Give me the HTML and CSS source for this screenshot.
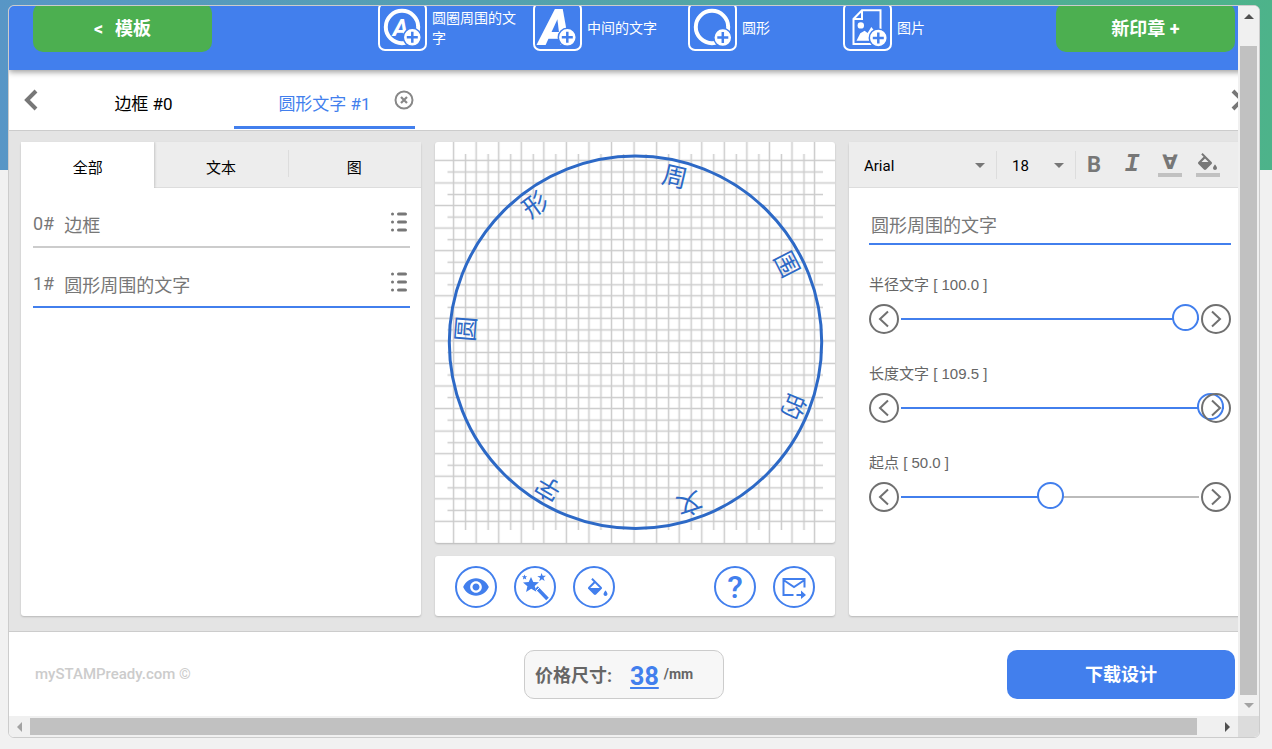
FILE: index.html
```html
<!DOCTYPE html>
<html lang="zh-CN">
  <head>
    <meta charset="UTF-8" />
    <meta name="viewport" content="width=device-width, initial-scale=1.0" />
    <title>mySTAMPready</title>
    <link rel="stylesheet" href="styles.css">
  </head>
  <body>
    <div class="frame">
      <div class="viewport">
        <div class="app">
          <header class="header">
            <button class="btn btn-green"><span class="lt">&lt;</span>模板</button>
            <nav class="add-menu">
              <button class="add-item">
                <svg class="add-icon" viewBox="0 0 49 49">
                  <rect x="1" y="1" width="47" height="47" rx="6" class="line2" />
                  <circle cx="24" cy="25" r="16.2" class="line4" />
                  <text x="22.5" y="34" class="letter" font-size="24">A</text>
                  <circle cx="34.3" cy="35.3" r="9" class="plus-bg" />
                  <path d="M34.3 29.8v11M28.8 35.3h11" class="plus" />
                </svg>
                <span>圆圈周围的文字</span>
              </button>
              <button class="add-item">
                <svg class="add-icon" viewBox="0 0 49 49">
                  <rect x="1" y="1" width="47" height="47" rx="6" class="line2" />
                  <text x="22.5" y="43" class="letter heavy" font-size="49">A</text>
                  <circle cx="34.3" cy="35.3" r="9" class="plus-bg" />
                  <path d="M34.3 29.8v11M28.8 35.3h11" class="plus" />
                </svg>
                <span>中间的文字</span>
              </button>
              <button class="add-item">
                <svg class="add-icon" viewBox="0 0 49 49">
                  <rect x="1" y="1" width="47" height="47" rx="6" class="line2" />
                  <circle cx="24" cy="25" r="16.2" class="line4" />
                  <circle cx="34.8" cy="35.6" r="9" class="plus-bg" />
                  <path d="M34.8 30.1v11M29.3 35.6h11" class="plus" />
                </svg>
                <span>圆形</span>
              </button>
              <button class="add-item">
                <svg class="add-icon" viewBox="0 0 49 49">
                  <rect x="1" y="1" width="47" height="47" rx="6" class="line2" />
                  <path d="M19 8.2h18.5V42H10.5V17z M19 8.2V17H10.5" class="line2" />
                  <circle cx="17.8" cy="23.4" r="3.2" fill="#fff" />
                  <path d="M13.5 38.8l3.8-7.5 4.3-2.600 3 2.2 3.7-6 5.7 7v6.9z" fill="#fff" />
                  <circle cx="35.3" cy="35.9" r="9" class="plus-bg" />
                  <path d="M35.3 30.4v11M29.8 35.9h11" class="plus" />
                </svg>
                <span>图片</span>
              </button>
            </nav>
            <button class="btn btn-green">新印章 +</button>
          </header>

          <div class="layers">
            <button class="scroll-btn" aria-label="上一个">
              <svg width="16" height="22" viewBox="0 0 16 22"><path d="M13 2L4 11l9 9" class="chevron" /></svg>
            </button>
            <div class="layer"><button class="layer-name">边框 #0</button></div>
            <div class="layer active">
              <button class="layer-name">圆形文字 #1</button>
              <button class="close" aria-label="删除">
                <svg width="20" height="20" viewBox="0 0 20 20">
                  <circle cx="10" cy="10" r="8.5" fill="none" stroke="#888" stroke-width="2" />
                  <path d="M7 7l6 6M13 7l-6 6" stroke="#888" stroke-width="2.2" />
                </svg>
              </button>
            </div>
            <button class="scroll-btn last" aria-label="下一个">
              <svg width="16" height="22" viewBox="0 0 16 22"><path d="M2 2l9 9-9 9" class="chevron" /></svg>
            </button>
          </div>

          <main class="workspace">
            <section class="panel">
              <div class="filters">
                <button class="filter active">全部</button>
                <button class="filter">文本</button>
                <button class="filter">图</button>
              </div>
              <ul class="items">
                <li class="item">
                  <span>0#</span><span class="item-name">边框</span>
                  <button class="item-menu" aria-label="菜单">
                    <svg width="18" height="22" viewBox="0 0 18 22">
                      <path d="M2.5 3h.01M2.5 11h.01M2.5 19h.01M8.5 3h7M8.5 11h7M8.5 19h7" />
                    </svg>
                  </button>
                </li>
                <li class="item active">
                  <span>1#</span><span class="item-name">圆形周围的文字</span>
                  <button class="item-menu" aria-label="菜单">
                    <svg width="18" height="22" viewBox="0 0 18 22">
                      <path d="M2.5 3h.01M2.5 11h.01M2.5 19h.01M8.5 3h7M8.5 11h7M8.5 19h7" />
                    </svg>
                  </button>
                </li>
              </ul>
            </section>

            <section class="center">
              <div class="stamp">
                <svg viewBox="0 0 400 401">
                  <defs>
                    <pattern id="grid-a" x="7.32" y="7.12" width="22.56" height="22.56" patternUnits="userSpaceOnUse">
                      <path d="M11.28 0v22.56M0 11.28h22.56" class="grid-line" />
                    </pattern>
                    <pattern id="grid-b" x="19.32" y="18.72" width="22.56" height="22.56" patternUnits="userSpaceOnUse">
                      <path d="M11.28 0v22.56M0 11.28h22.56" class="grid-line" />
                    </pattern>
                  </defs>
                  <rect width="400" height="401" fill="url(#grid-a)" />
                  <rect x="12.5" y="12" width="375.5" height="376" fill="url(#grid-b)" />
                  <circle cx="200.5" cy="200.3" r="186.2" class="ring" />
                  <g class="ring-text">
                    <text x="200.5" y="39" transform="rotate(-85.5 200.5 200.3)">圆</text>
                    <text x="200.5" y="39" transform="rotate(-36.1 200.5 200.3)">形</text>
                    <text x="200.5" y="39" transform="rotate(13.3 200.5 200.3)">周</text>
                    <text x="200.5" y="39" transform="rotate(62.7 200.5 200.3)">围</text>
                    <text x="200.5" y="39" transform="rotate(112.1 200.5 200.3)">的</text>
                    <text x="200.5" y="39" transform="rotate(161.5 200.5 200.3)">文</text>
                    <text x="200.5" y="39" transform="rotate(210.9 200.5 200.3)">字</text>
                  </g>
                </svg>
              </div>
              <div class="tools">
                <button class="tool" aria-label="预览">
                  <svg width="28" height="28" viewBox="0 0 24 24"><path d="M12 4.5C7 4.5 2.73 7.61 1 12c1.73 4.39 6 7.5 11 7.5s9.27-3.11 11-7.5c-1.73-4.39-6-7.5-11-7.5zM12 17c-2.76 0-5-2.24-5-5s2.24-5 5-5 5 2.24 5 5-2.24 5-5 5zm0-8c-1.66 0-3 1.34-3 3s1.34 3 3 3 3-1.34 3-3-1.34-3-3-3z" /></svg>
                </button>
                <button class="tool" aria-label="效果">
                  <svg width="28" height="30" viewBox="0 0 28 30">
                    <path d="M10 5l2.3 5 5.7.2-4.3 3.9 1.7 5.6-5.2-2.9-5.1 3.2 1.3-5.8L2 10.5l5.7-.6z" />
                    <path d="M20.5 1l1.2 2.8 3.2-.1-2.4 2.1 1.2 3.1-2.8-1.6-2.600 2 .8-3.2-2.8-1.8 3.2-.3z" />
                    <path d="M3.5 2.5l.8 1.7 1.9.1-1.5 1.3.6 1.9-1.7-1.1-1.7 1.2.5-2L.9 4.3l1.9-.1z" />
                    <path d="M15.5 15.5L26.5 27" stroke="#427fed" stroke-width="3.6" />
                    <path d="M15 19l4-4" stroke="#fff" stroke-width="1" />
                  </svg>
                </button>
                <button class="tool" aria-label="颜色">
                  <svg class="bucket" width="24" height="24" viewBox="0 0 24 24"><path d="M16.56 8.94L7.62 0 6.21 1.41l2.38 2.38-5.15 5.15c-.59.59-.59 1.54 0 2.12l5.5 5.5c.29.29.68.44 1.06.44s.77-.15 1.06-.44l5.5-5.5c.59-.58.59-1.53 0-2.12zM5.21 10L10 5.21 14.79 10H5.21zM20.5 12.5s-2 2.17-2 3.5c0 1.1.9 2 2 2s2-.9 2-2c0-1.33-2-3.5-2-3.5z" /></svg>
                </button>
                <button class="tool help">?</button>
                <button class="tool" aria-label="发送">
                  <svg width="26" height="24" viewBox="0 0 26 24">
                    <path d="M12.5 20H2.5V4h21v8.5M2.5 5l10.5 7 10.5-7" fill="none" stroke="#427fed" stroke-width="2" />
                    <path d="M15.5 19h4.5v-3.5l5 4.5-5 4V21h-4.5z" />
                  </svg>
                </button>
              </div>
            </section>

            <section class="panel">
              <div class="format">
                <label class="picker font"><select aria-label="字体"><option>Arial</option></select></label>
                <label class="picker size"><select aria-label="字号"><option>18</option></select></label>
                <div class="styles">
                  <button class="style bold">B</button>
                  <button class="style italic">I</button>
                  <button class="style color">∀</button>
                  <button class="style color" aria-label="填充颜色">
                    <svg width="20" height="18" viewBox="3 0 20 18" fill="#777"><path d="M16.56 8.94L7.62 0 6.21 1.41l2.38 2.38-5.15 5.15c-.59.59-.59 1.54 0 2.12l5.5 5.5c.29.29.68.44 1.06.44s.77-.15 1.06-.44l5.5-5.5c.59-.58.59-1.53 0-2.12zM6.5 9L10 5.5 13.5 9zM20 11.5s-2 2.17-2 3.5c0 1.1.9 2 2 2s2-.9 2-2c0-1.33-2-3.5-2-3.5z" /></svg>
                  </button>
                </div>
              </div>
              <div class="props">
                <input class="text" type="text" value="圆形周围的文字" aria-label="文字" />
                <div class="prop">
                  <label for="radius">半径文字 [ 100.0 ]</label>
                  <div class="slider">
                    <button class="step" aria-label="减少"><svg width="26" height="26" viewBox="0 0 26 26"><path d="M17 5.5L9 13l8 7.5" /></svg></button>
                    <input id="radius" type="range" min="0" max="100" value="100" style="--fill: 100%" />
                    <button class="step" aria-label="增加"><svg width="26" height="26" viewBox="0 0 26 26"><path d="M9 5.5l8 7.5-8 7.5" /></svg></button>
                  </div>
                </div>
                <div class="prop">
                  <label for="length">长度文字 [ 109.5 ]</label>
                  <div class="slider over">
                    <button class="step" aria-label="减少"><svg width="26" height="26" viewBox="0 0 26 26"><path d="M17 5.5L9 13l8 7.5" /></svg></button>
                    <input id="length" type="range" min="0" max="109.5" step="0.5" value="109.5" style="--fill: 100%" />
                    <button class="step" aria-label="增加"><svg width="26" height="26" viewBox="0 0 26 26"><path d="M9 5.5l8 7.5-8 7.5" /></svg></button>
                  </div>
                </div>
                <div class="prop">
                  <label for="start">起点 [ 50.0 ]</label>
                  <div class="slider">
                    <button class="step" aria-label="减少"><svg width="26" height="26" viewBox="0 0 26 26"><path d="M17 5.5L9 13l8 7.5" /></svg></button>
                    <input id="start" type="range" min="0" max="100" value="50" style="--fill: 54%" />
                    <button class="step" aria-label="增加"><svg width="26" height="26" viewBox="0 0 26 26"><path d="M9 5.5l8 7.5-8 7.5" /></svg></button>
                  </div>
                </div>
              </div>
            </section>
          </main>

          <footer class="footer">
            <span class="brand">mySTAMPready.com ©</span>
            <div class="price">
              <span class="price-label">价格尺寸:</span>
              <a class="price-value" href="#">38</a>
              <span class="price-unit">/mm</span>
            </div>
            <button class="btn btn-blue">下载设计</button>
          </footer>
        </div>
      </div>

      <div class="bar vertical">
        <span class="arrow"><i class="up"></i></span>
        <span class="thumb"></span>
        <span class="arrow"><i class="down"></i></span>
      </div>
      <div class="bar horizontal">
        <span class="arrow"><i class="left"></i></span>
        <span class="thumb"></span>
        <span class="arrow"><i class="right"></i></span>
      </div>
      <div class="corner"></div>
    </div>
  </body>
</html>
```
FILE: styles.css
```css
* {
  box-sizing: border-box;
}
body {
  margin: 0;
  padding: 5px 12px 11px 8px;
  font-family: Roboto, "Noto Sans CJK SC", sans-serif;
  background: #f1f1f1 linear-gradient(90deg, #5896c6, #4db38a) no-repeat;
  background-size: 100% 170px;
}
button,
input,
select {
  font: inherit;
  color: inherit;
  background: none;
  border: none;
  padding: 0;
  margin: 0;
}
button {
  cursor: pointer;
}
svg {
  display: block;
}

/* frame with its scrollbars */
.frame {
  display: grid;
  grid-template-columns: minmax(0, 1fr) 21px;
  grid-template-rows: auto 21px;
  border: 1px solid #ccc;
  border-radius: 6px;
  overflow: hidden;
  background: #fff;
}
.viewport {
  overflow: hidden;
}
.app {
  width: calc(100% + 23px);
}
.bar {
  display: flex;
  background: #f0f0f0;
}
.vertical {
  flex-direction: column;
}
.arrow {
  flex: 0 0 21px;
  display: flex;
  align-items: center;
  justify-content: center;
}
.arrow i {
  border: 5px solid transparent;
}
.arrow .up {
  border-top: none;
  border-bottom-color: #505050;
}
.arrow .down {
  border-bottom: none;
  border-top-color: #a3a3a3;
}
.arrow .left {
  border-left: none;
  border-right-color: #a3a3a3;
}
.arrow .right {
  border-right: none;
  border-left-color: #505050;
}
.thumb {
  flex: 1;
  background: #c1c1c1;
}
.vertical .thumb {
  margin: 19px 2px 0;
}
.horizontal .thumb {
  margin: 2px 20px 2px 0;
}
.corner {
  background: #dcdcdc;
}

/* header */
.header {
  position: relative;
  z-index: 1;
  display: flex;
  justify-content: space-between;
  align-items: flex-start;
  height: 64px;
  padding: 0 26px 0 24px;
  background: #427fed;
  box-shadow: 0 2px 6px rgba(0, 0, 0, 0.4);
}
.header > * {
  margin-top: -3px;
}
.btn {
  height: 49px;
  padding-bottom: 2px;
  border-radius: 10px;
  color: #fff;
  font-size: 18px;
  font-weight: bold;
}
.btn-green {
  width: 179px;
  background: #4caf50;
}
.btn-blue {
  width: 228px;
  background: #427fed;
}
.lt {
  margin-right: 12px;
}
.add-menu {
  display: flex;
  margin-left: auto;
  margin-right: 58px;
}
.header .add-menu {
  margin-top: -4px;
}
.add-item {
  display: flex;
  align-items: center;
  gap: 5px;
  width: 155px;
  padding-right: 10px;
  color: #fff;
  font-size: 14px;
  line-height: 20px;
  text-align: left;
}
.add-item span {
  padding-top: 3px;
}
.add-icon {
  flex: 0 0 49px;
  height: 49px;
}
.line2,
.line4 {
  fill: none;
  stroke: #fff;
  stroke-width: 2;
}
.line4 {
  stroke-width: 4;
}
.letter {
  fill: #fff;
  font-weight: bold;
  font-style: italic;
  text-anchor: middle;
}
.heavy {
  font-weight: 900;
}
.plus-bg {
  fill: #fff;
  stroke: #427fed;
  stroke-width: 1.5;
}
.plus {
  stroke: #427fed;
  stroke-width: 2.5;
}

/* layer tabs */
.layers {
  display: flex;
  height: 61px;
  background: #fff;
  border-bottom: 1px solid #ccc;
}
.scroll-btn {
  width: 44px;
  display: flex;
  align-items: center;
  justify-content: center;
}
.last {
  margin-left: auto;
}
.chevron {
  fill: none;
  stroke: #777;
  stroke-width: 4;
}
.layer {
  position: relative;
  width: 181px;
  padding-bottom: 1px;
}
.layer-name {
  width: 100%;
  height: 100%;
  padding-top: 8px;
  font-size: 17px;
  border-bottom: 3px solid transparent;
}
.layer.active .layer-name {
  color: #427fed;
  border-color: #427fed;
}
.close {
  position: absolute;
  top: 20px;
  right: 1px;
}

/* workspace */
.workspace {
  display: grid;
  grid-template-columns: repeat(3, minmax(0, 1fr));
  gap: 14px;
  padding: 11px 12px 15px;
  background: #e4e4e4;
}
.panel,
.stamp,
.tools {
  background: #fff;
  border-radius: 3px;
  box-shadow: 0 1px 2px rgba(0, 0, 0, 0.2);
}
.filters {
  display: flex;
  height: 46px;
}
.filter {
  flex: 1;
  font-size: 15px;
  padding-top: 3px;
  background: #ededed;
  border-bottom: 1px solid #ddd;
}
.filter.active {
  background: #fff;
  border-color: #fff;
  box-shadow: 0 0 3px rgba(0, 0, 0, 0.3);
  clip-path: inset(0 -3px 0 0);
}
.filter:last-child {
  background: linear-gradient(#ddd, #ddd) 0 8px / 1px 27px no-repeat #ededed;
}
.items {
  margin: 0;
  padding: 0 11px 0 12px;
  list-style: none;
}
.item {
  display: flex;
  align-items: center;
  height: 60px;
  padding-top: 13px;
  border-bottom: 2px solid #ccc;
  color: #777;
  font-size: 18px;
}
.item.active {
  border-color: #427fed;
}
.item-name {
  margin-left: 10px;
}
.item-menu {
  margin-left: auto;
  padding: 0 2px 3px 0;
}
.item-menu path {
  stroke: #777;
  stroke-width: 3;
  stroke-linecap: round;
}

/* stamp */
.center {
  display: flex;
  flex-direction: column;
  gap: 13px;
}
.grid-line {
  stroke: #ccc;
  stroke-width: 1.5;
}
.ring {
  fill: none;
  stroke: #2d69c6;
  stroke-width: 3;
}
.ring-text {
  fill: #2d69c6;
  font-size: 25px;
  text-anchor: middle;
}
.tools {
  display: flex;
  align-items: center;
  gap: 17px;
  height: 60px;
  padding: 2px 20px 0;
}
.tool {
  display: flex;
  align-items: center;
  justify-content: center;
  width: 42px;
  height: 42px;
  border: 2px solid #427fed;
  border-radius: 50%;
  color: #427fed;
  fill: #427fed;
}
.bucket {
  margin: 5px 0 0 6px;
}
.help {
  margin-left: auto;
  font-size: 32px;
  font-weight: 500;
}

/* properties */
.format {
  display: flex;
  align-items: center;
  height: 46px;
  background: #ededed;
  border-bottom: 1px solid #ddd;
}
.picker {
  display: flex;
  align-items: center;
  height: 28px;
  padding: 2px 11px 0 15px;
  border-right: 1px solid #ddd;
  font-size: 15px;
}
.picker select {
  flex: 1;
  appearance: none;
}
.picker::after {
  content: "";
  border: 5px solid transparent;
  border-top-color: #777;
  border-bottom: none;
}
.font {
  width: 148px;
}
.size {
  width: 79px;
}
.styles {
  display: flex;
  align-items: center;
  padding-left: 6px;
}
.style {
  display: flex;
  flex-direction: column;
  align-items: center;
  width: 24px;
  height: 24px;
  margin-right: 14px;
  color: #777;
  font-size: 22px;
  font-weight: bold;
  line-height: 24px;
}
.italic {
  font-family: "Liberation Mono", monospace;
  font-style: italic;
  font-size: 25px;
}
.color {
  border-bottom: 4px solid #c1c1c1;
  font-family: "DejaVu Sans", sans-serif;
  font-size: 20px;
  line-height: 18px;
}
.props {
  display: flex;
  flex-direction: column;
  gap: 29px;
  padding: 17px 18px 0 20px;
}
.text {
  height: 40px;
  padding: 0 2px;
  border-bottom: 2px solid #427fed;
  color: #777;
  font-size: 18px;
  outline: none;
}
.prop {
  color: #666;
  font-family: "Liberation Sans", "Noto Sans CJK SC", sans-serif;
  font-size: 15px;
}
.prop label {
  display: block;
  margin-bottom: 8px;
  line-height: 22px;
}
.slider {
  display: flex;
  align-items: center;
  gap: 2px;
}
.step {
  position: relative;
  flex: 0 0 30px;
  height: 30px;
  border: 2px solid #707070;
  border-radius: 50%;
}
.step path {
  fill: none;
  stroke: #707070;
  stroke-width: 2;
}
input[type="range"] {
  flex: 1;
  min-width: 0;
  height: 30px;
  appearance: none;
}
.over input[type="range"] {
  margin-right: -25px;
}
input[type="range"]::-webkit-slider-runnable-track {
  height: 2px;
  background: linear-gradient(#427fed, #427fed) no-repeat #bbb;
  background-size: var(--fill) 100%;
}
input[type="range"]::-webkit-slider-thumb {
  appearance: none;
  width: 27px;
  height: 27px;
  margin-top: -14px;
  border: 2px solid #427fed;
  border-radius: 50%;
  background: #fff;
}

/* footer */
.footer {
  display: grid;
  grid-template-columns: 1fr auto 1fr;
  align-items: center;
  height: 85px;
  padding: 0 26px;
  background: #fff;
  border-top: 1px solid #ccc;
}
.brand {
  color: #ccc;
  font-size: 15px;
  font-weight: 500;
}
.price {
  display: flex;
  align-items: center;
  width: 200px;
  height: 49px;
  margin-right: 22px;
  padding-left: 10px;
  background: #f7f7f7;
  border: 1px solid #ccc;
  border-radius: 10px;
  color: #666;
}
.price-label {
  font-size: 18px;
  font-weight: bold;
}
.price-value {
  margin: 4px 5px 0 18px;
  color: #427fed;
  font-size: 25px;
  font-weight: bold;
}
.price-unit {
  font-size: 14px;
  font-weight: bold;
}
.footer .btn {
  justify-self: end;
}
```
